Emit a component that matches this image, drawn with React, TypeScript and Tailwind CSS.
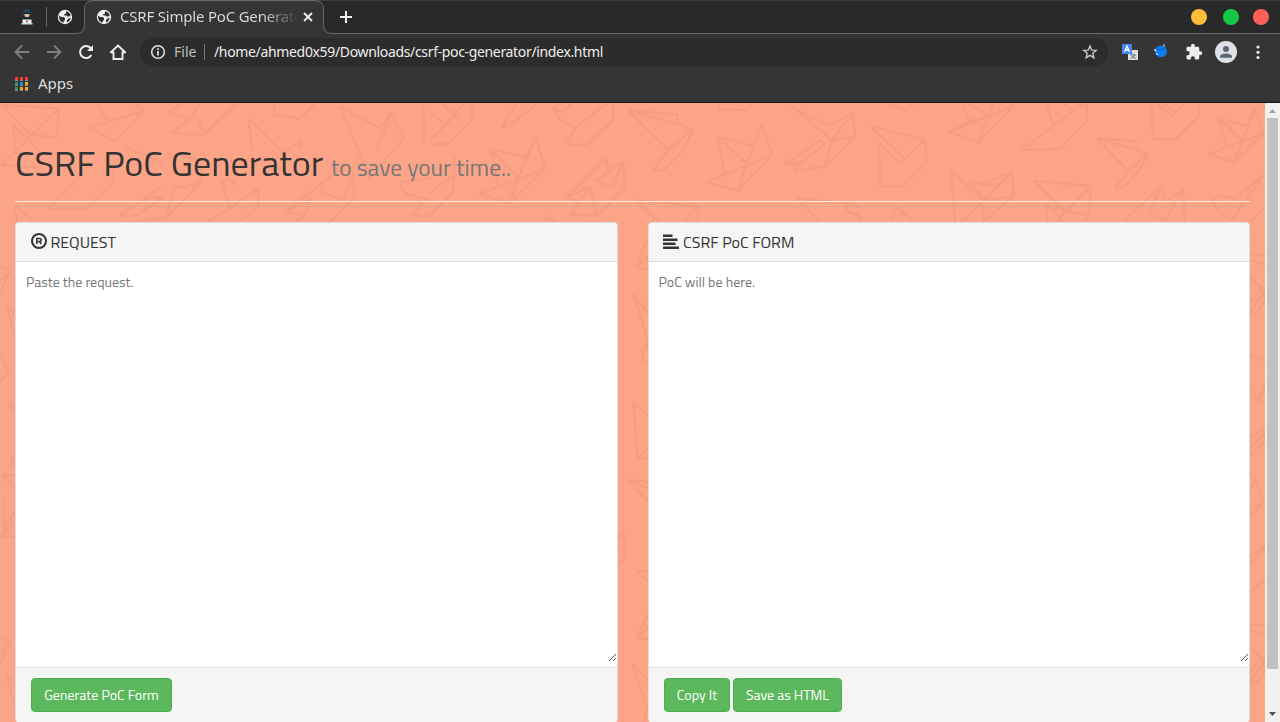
import React from "react";

const STROKES: { transform: string; d: string }[] = [
  {
    transform: "translate(0 100) scale(.33333)",
    d: "M5 15L175 25L172 112L95 105ZM175 25L78 120M40 75L48 165M40 75L125 160M95 105L5 195L110 202M62 92L125 160M290 10L325 65L430 33L345 123L270 85L325 65M400 10L432 33M545 10L505 38L570 55L600 10M505 38L540 45M570 55L515 100L610 105L710 10M595 60L612 105M825 10L820 45L900 55L945 10M745 55L757 155M745 55L850 160L905 120L900 150M1020 20L1140 85L1172 40L1212 112L1110 235ZM1172 40L1130 150M1140 85L1152 98M1270 15L1272 130M375 140L490 190M500 160L605 180L600 250L520 265L500 350L600 250M482 262L355 350L410 345L495 290L430 300ZM410 365L500 350M240 230L145 328L260 325L340 245L340 210M665 245L690 325L775 265L775 320L715 365M690 325L625 365M670 250L685 235L710 255M975 240L960 275L1030 300L1060 220L1062 295L990 365M860 335L935 295L915 345ZM915 345L890 365M855 335L1030 200M1290 235L1200 248L1215 280L1290 300M1270 305L1235 345L1290 350M45 315L100 365M45 315L50 365",
  },
  {
    transform: "translate(430 100) scale(.33333)",
    d: "M35 10L90 62M125 10V60L55 132L0 132M0 35L45 75L100 10M0 120L60 62M260 10L215 80L240 78L320 10M385 10L370 30L390 60L435 85L410 132L470 135L550 60V10M375 30L400 35L425 10M435 85L530 10M595 32L743 43L740 70L595 32L715 150L670 210L700 212L760 150L788 90L740 70M715 150L788 90M865 10L868 28L950 30L970 10M1080 18L1195 75L1268 42L1275 110L1205 120L1085 18M1205 120L1268 42M1205 120L1185 200L1275 110M1170 122L1062 195L1110 190L1185 130ZM1110 190L1095 212L1185 200M862 110L970 138L995 75L1027 165L922 272L830 245L1027 165M862 110L885 225M862 110L950 190L995 75M950 190L922 272M182 148L290 172L317 112L346 205L240 310L148 282L346 205M182 148L205 262M182 148L265 235L317 112M265 235L240 310M75 170L70 275L0 345M0 280L75 220M498 240L580 185L583 265L500 348L420 343L480 262L410 292L528 175L535 220M498 240L545 260L580 185M480 262L500 348M410 292L455 310M618 300L805 320L803 365M618 300L685 365M760 365L805 320M1100 295L1250 310L1290 320M1100 295L1170 365M1250 310V335L1290 345M340 345L375 365M340 345L345 365M650 420L618 505L655 507M640 465L655 480M610 585L650 630M610 585L628 630",
  },
  {
    transform: "translate(850 100) scale(.33333)",
    d: "M0 40L10 42L16 105L0 125M120 10L162 32L195 10M62 78L225 120L230 187L158 260L90 258L88 128L150 190L225 120M62 78L165 178M340 10L357 65L415 48L295 95L387 125L490 18L415 48L387 125M357 65L295 95M355 10L415 48L430 10M490 10V18M590 10L610 78L515 150L630 147L710 65V10M610 78L700 10M640 10L670 32M905 10L908 117L977 118L1047 48V10M920 10L965 50L1005 10M940 10L980 40M1107 53L1190 78L1216 28L1240 100L1153 187L1078 163L1240 100M1107 53L1130 145M1107 53L1177 125L1216 28M1177 125L1153 187M740 115L858 123L857 145M740 115L893 160L873 205L822 262L795 262L835 213L740 115M835 213L893 160M303 213L315 365M303 213L400 300L490 290L487 217L400 300M362 250L443 253M362 250L400 295M415 253L430 238L487 217M490 290L400 365L395 310M395 310L335 365M552 243L723 258L718 345L645 335ZM645 335L723 258M588 310L592 365M588 310L640 365M610 330L625 318L645 335L620 365M718 345L700 365M935 255L820 365M935 255L895 342L945 362L1000 268L1003 365M935 255L945 305L1000 268M1240 225L1155 295L1112 287L1085 302L1098 325L1145 360L1240 225M1240 325L1200 365M0 340L35 350L25 365M142 320L125 360M142 320L190 365M150 345L165 335",
  },
  {
    transform: "translate(610 260) scale(.33333)",
    d: "M78 22L100 0M78 22L114 28M70 100L114 160M70 100L112 235L95 305L114 305M112 235L114 270M70 425L114 468M70 425L83 595L114 595M83 595L114 565M52 660L114 665M52 660L114 722M52 660L114 683M23 825L40 812L45 895L23 915M23 840L40 812M78 930L114 935M78 930L114 965M80 1135L114 1060M80 1135L114 1138M80 1135L114 1100M68 1213L114 1260M68 1213L112 1345L98 1400",
  },
  {
    transform: "translate(0 220) scale(.33333)",
    d: "M0 140L30 155L0 220M0 185L30 155M20 255L45 285M20 255L45 350M0 405L27 455L0 485M27 557L45 570M27 557L45 555M45 700L30 742H45M5 765H45M5 765L45 802M12 825L14 935M45 870L5 948L45 952M5 948L45 905M0 1250L30 1265L0 1330M0 1300L30 1265M20 1368L45 1395M20 1368L45 1460",
  },
  {
    transform: "translate(1240 220) scale(.33333)",
    d: "M30 102L75 105M30 120L75 135M30 170L75 212L30 275M62 205L75 240L50 278H30M62 205L30 250M30 403L75 425M30 492L55 545L75 490M30 655L75 625M30 685L75 640M30 708L75 660M30 810L45 775L70 850L30 890M30 865L70 850M30 1010L75 975M30 1035L75 980M30 1120L75 1075M30 1213L75 1215M30 1230L75 1245M30 1280L75 1325L30 1385M62 1315L75 1350L50 1390H30M62 1315L30 1360",
  },
];

function Backdrop() {
  return (
    <svg className="absolute inset-0" width="1265" height="619" viewBox="0 103 1265 619" fill="none" stroke="#f49d80" strokeWidth="6.5" strokeLinejoin="round" aria-hidden="true">
      {STROKES.map((s) => (
        <path key={s.transform} transform={s.transform} d={s.d} />
      ))}
    </svg>
  );
}

function Globe() {
  return (
    <svg width="16" height="16" viewBox="0 0 16 16" className="shrink-0">
      <circle cx="8" cy="8" r="7.2" fill="#eeeeee" />
      <path d="M2.300 6.500L4 8H6.800L8 9.300V11L6.500 12.500V13.700C4 13.200 2 11 2 8ZM9 2.200C11.200 2.500 13 4 13.700 6.200L12.300 7.500H10.500L9.500 6.500H7.500L6.800 5.500L9 4.500ZM13.800 8.800C13.300 11 12 12.700 10 13.500L9.800 11.500L11.500 9.500Z" fill="#303030" />
    </svg>
  );
}

function TabStrip() {
  return (
    <div className="relative h-[34px] bg-[#292929]">
      <svg className="absolute inset-0" width="1280" height="34" viewBox="0 0 1280 34" fill="none">
        <path d="M0 .5H1280" stroke="#3b3b3b" />
        <path d="M76 34Q84.500 33.500 84.500 25V9Q84.500 .5 93 .5H315Q323.500 .5 323.500 9V25Q323.500 33.500 332 34Z" fill="#353535" />
        <path d="M0 33.500H76Q84.500 33.500 84.500 25V9Q84.500 .5 93 .5H315Q323.500 .5 323.500 9V25Q323.500 33.500 332 33.500H1280" stroke="#686868" />
      </svg>
      <div className="relative flex h-full items-center">
        <div className="flex w-[84px] items-center pl-[19px]">
          <svg width="16" height="18" viewBox="0 0 16 18">
            <path d="M4 6Q4 1 8 1T12 6L13 7H3Z" fill="#214758" />
            <path d="M5.500 5H10.500V8Q8 11 5.500 8Z" fill="#e8b890" />
            <path d="M5 4.500H11V6H5Z" fill="#14222b" />
            <path d="M2 13Q3 9 8 9T14 13V15H2Z" fill="#172a34" />
            <path d="M3.500 11.500H12.500V16H3.500Z" fill="#eeeeee" />
            <path d="M2.500 15H13.500V16.500H2.500Z" fill="#d8d8d8" />
            <circle cx="8" cy="13.500" r="1" fill="#d03c3c" />
          </svg>
          <span className="ml-[11px] mr-[10px] h-5 w-px bg-[#666]" />
          <Globe />
        </div>
        <div className="flex w-[239px] items-center pl-3">
          <Globe />
          <span className="relative -top-px ml-2 w-[178px] overflow-hidden whitespace-nowrap bg-linear-to-r from-[#dedede] from-80% to-transparent to-100% bg-clip-text text-[15px] leading-6 tracking-[-0.2px] text-transparent">CSRF Simple PoC Generator</span>
          <svg className="ml-[5px]" width="10" height="10" viewBox="0 0 10 10" stroke="#f0f0f0" strokeWidth="1.8"><path d="M1 1L9 9M9 1L1 9" /></svg>
        </div>
        <svg className="ml-[17px]" width="12" height="12" viewBox="0 0 12 12" stroke="#f2f2f2" strokeWidth="2"><path d="M6 0V12M0 6H12" /></svg>
        <div className="ml-auto flex items-center pr-[11px]">
          <span className="size-4 rounded-full bg-[#ffbd39]" />
          <span className="ml-4 size-4 rounded-full bg-[#15c846]" />
          <span className="ml-[14px] size-4 rounded-full bg-[#ff5f57]" />
        </div>
      </div>
    </div>
  );
}

function Toolbar() {
  return (
    <div className="flex h-9 items-center pl-[14px]">
      <svg width="16" height="16" viewBox="0 0 16 16" fill="none" stroke="#808080" strokeWidth="1.8"><path d="M15 8H2M8 1.500L1.500 8L8 14.500" /></svg>
      <svg className="ml-4" width="16" height="16" viewBox="0 0 16 16" fill="none" stroke="#808080" strokeWidth="1.8"><path d="M1 8H14M8 1.500L14.500 8L8 14.500" /></svg>
      <svg className="ml-4" width="16" height="16" viewBox="0 0 16 16" fill="none"><path d="M13.300 11A6 6 0 1 1 12.500 4" stroke="#eee" strokeWidth="2" /><path d="M15 1V7H9Z" fill="#eee" /></svg>
      <svg className="ml-4" width="16" height="16" viewBox="0 0 16 16" fill="none" stroke="#eee" strokeWidth="1.9"><path d="M.8 8.400H3.500V15H12.500V8.400H15.200L8 1.500Z" /></svg>
      <div className="ml-[14px] flex h-7 w-[968px] items-center rounded-full bg-[#2c2c2c] pl-[10px] pr-[10px] text-[14px]">
        <svg width="16" height="16" viewBox="0 0 16 16" fill="none"><circle cx="8" cy="8" r="6.300" stroke="#e4e4e4" strokeWidth="1.5" /><path d="M8 7V11.500M8 4.300V5.900" stroke="#e4e4e4" strokeWidth="1.700" /></svg>
        <span className="relative -top-px ml-2 w-[23px] whitespace-nowrap text-[#bdbdbd]">File</span>
        <span className="ml-[7px] mr-[9px] h-4 w-px bg-[#777]" />
        <span className="relative -top-px whitespace-nowrap tracking-[-0.34px] text-[#eeeeee]">/home/ahmed0x59/Downloads/csrf-poc-generator/index.html</span>
        <svg className="ml-auto" width="16" height="16" viewBox="0 0 16 16" fill="none" stroke="#c8c8c8" strokeWidth="1.4"><path d="M8 2L9.700 6.100L14.200 6.400L10.800 9.300L11.900 13.700L8 11.300L4.100 13.700L5.200 9.300L1.800 6.400L6.300 6.100Z" /></svg>
      </div>
      <svg className="ml-[14px]" width="16" height="16" viewBox="0 0 16 16">
        <path d="M6 6H16V16H6Z" fill="#dddfdd" /><path d="M0 0H10V10H0Z" fill="#4285f4" />
        <path d="M2.500 8L5 2L7.500 8M3.400 6H6.600" fill="none" stroke="#fff" strokeWidth="1.3" />
        <path d="M8 11H14M11 9.500V11M13 11Q12 14 8.500 14.500M9.500 11.500Q11 14 14 14.500" fill="none" stroke="#607d8b" strokeWidth="1" />
      </svg>
      <svg className="ml-[15px]" width="16" height="16" viewBox="0 0 16 16">
        <circle cx="8" cy="7.300" r="5.900" fill="#087cf5" />
        <path d="M1 5L3.500 4V8Z" fill="#087cf5" />
        <path d="M4 5Q8 7.500 11.500 4" fill="none" stroke="#075bc0" strokeWidth="1.2" />
        <path d="M1 5.500L3.500 7M3 9.500L5 10.500M10.800 .3L11.300 2.500" fill="none" stroke="#e9f3ff" strokeWidth="1.100" />
      </svg>
      <svg className="ml-[16px]" width="18" height="18" viewBox="0 0 24 24" fill="#eeeeee"><path d="M20.500 11H19V7c0-1.100-.9-2-2-2h-4V3.500a2.500 2.500 0 0 0-5 0V5H4c-1.100 0-2 .9-2 2v3.800h1.500a2.700 2.700 0 0 1 0 5.400H2V20c0 1.100.9 2 2 2h3.800v-1.500a2.700 2.700 0 0 1 5.400 0V22H17c1.100 0 2-.9 2-2v-4h1.500a2.500 2.500 0 0 0 0-5z" /></svg>
      <svg className="ml-[12px]" width="22" height="22" viewBox="0 0 22 22"><circle cx="11" cy="11" r="11" fill="#dfe1e7" /><circle cx="11" cy="8" r="3" fill="#5d6779" /><path d="M5 16.800V15Q6 12.500 11 12.500T17 15V16.800Z" fill="#5d6779" /></svg>
      <svg className="ml-[19px]" width="4" height="16" viewBox="0 0 4 16" fill="#eee"><circle cx="2" cy="3" r="1.600" /><circle cx="2" cy="8.300" r="1.600" /><circle cx="2" cy="13.500" r="1.600" /></svg>
    </div>
  );
}

function AppsIcon() {
  const colors = ["#f43d34", "#f43d34", "#f43d34", "#2a9d55", "#138cf5", "#f5ab19", "#2a9d55", "#f5ab19", "#f5ab19"];
  return (
    <svg width="14" height="14" viewBox="0 0 14 14">
      {colors.map((c, i) => (
        <g key={i} transform={`translate(${(i % 3) * 5} ${Math.floor(i / 3) * 5})`}>
          <rect width="3" height="3" fill={c} />
          <rect y="3" width="3" height="1" fill="#c9c9c9" opacity=".6" />
        </g>
      ))}
    </svg>
  );
}

function ResizeGrip() {
  return (
    <svg className="absolute bottom-[5px] right-0" width="9" height="9" viewBox="0 0 9 9" fill="none" stroke="#555" strokeWidth="1"><path d="M1 8L8 1M5 8L8 5" /></svg>
  );
}

function Panel({ icon, title, hint, children }: { icon: React.ReactNode; title: string; hint: string; children: React.ReactNode }) {
  return (
    <section className="flex h-[501px] flex-col overflow-hidden rounded-[4px] border border-[#ddd] bg-white">
      <h2 className="flex h-[39px] shrink-0 items-center border-b border-[#ddd] bg-[#f5f5f5] pl-[15px] text-[16px] text-[#333]">
        {icon}
        <span className="ml-[3.5px]">{title}</span>
      </h2>
      <div className="relative h-[405px] shrink-0 pl-[10px] pt-[10px] text-[14px] leading-5 text-[#777]">
        <span>{hint}</span>
        <ResizeGrip />
      </div>
      <div className="flex flex-1 items-start gap-[3px] border-t border-[#ddd] bg-[#f5f5f5] pl-[15px] pt-[10px]">{children}</div>
    </section>
  );
}

function Button({ label, size }: { label: string; size: string }) {
  return (
    <button className={`flex h-[34px] items-center justify-center whitespace-nowrap rounded-[4px] border border-[#4cae4c] bg-[#5cb85c] pb-px text-[14px] leading-5 text-white ${size}`}>{label}</button>
  );
}

export default function App() {
  return (
    <div className="flex h-[722px] w-[1280px] flex-col overflow-hidden bg-[#353535] font-['Noto_Sans',sans-serif]">
      <TabStrip />
      <Toolbar />
      <div className="flex h-[33px] shrink-0 items-start border-b border-[#151515] pl-[15px] pt-[2px] text-[15px] text-[#dedede]">
        <div className="flex h-6 items-center gap-[9px]">
          <AppsIcon />
          <span className="relative -top-px w-9">Apps</span>
        </div>
      </div>
      <div className="flex h-[619px] shrink-0">
        <main className="relative w-[1265px] overflow-hidden bg-[#fca488] px-[15px] font-['Titillium_Web',Roboto,sans-serif]">
          <Backdrop />
          <div className="relative">
            <h1 className="flex h-[99px] items-baseline border-b border-[#eee] pt-[40px] leading-10 text-[#333]">
              <span className="w-[316px] whitespace-nowrap text-[36px] font-normal">CSRF PoC Generator</span>
              <span className="whitespace-nowrap text-[23.4px] font-normal text-[#777]">to save your time..</span>
            </h1>
            <div className="mt-5 grid grid-cols-[602.5px_602.5px] gap-[30px]">
              <Panel
                title="REQUEST"
                hint="Paste the request."
                icon={<svg className="-mt-[2px]" width="16" height="16" viewBox="0 0 16 16" fill="none" stroke="#333"><circle cx="8" cy="8" r="7" strokeWidth="2" /><path d="M5.800 11V5.500H9Q10.300 5.500 10.300 7T9 8.500H5.800M8.500 8.500L10.300 11" strokeWidth="1.500" /></svg>}
              >
                <Button label="Generate PoC Form" size="w-[141px]" />
              </Panel>
              <Panel
                title="CSRF PoC FORM"
                hint="PoC will be here."
                icon={<svg className="-ml-[0.5px] mr-[0.5px] -mt-px" width="16" height="16" viewBox="0 0 16 16" fill="#333"><path d="M0 .5H9.500V3H0ZM0 4.500H14.500V7H0ZM0 8.500H12.500V11H0ZM0 12.500H16V15H0Z" /></svg>}
              >
                <Button label="Copy It" size="w-[66px] pl-px" />
                <Button label="Save as HTML" size="w-[109px] pl-px" />
              </Panel>
            </div>
          </div>
        </main>
        <div className="flex w-[15px] flex-col items-center bg-[#f1f1f1]">
          <svg className="shrink-0" width="15" height="15" viewBox="0 0 15 15" fill="#a3a3a3"><path d="M4 10L7.500 6L11 10Z" /></svg>
          <div className="h-[551px] w-[11px] bg-[#c1c1c1]" />
          <svg className="mt-auto shrink-0" width="15" height="15" viewBox="0 0 15 15" fill="#505050"><path d="M4 5L7.500 9L11 5Z" /></svg>
        </div>
      </div>
    </div>
  );
}
